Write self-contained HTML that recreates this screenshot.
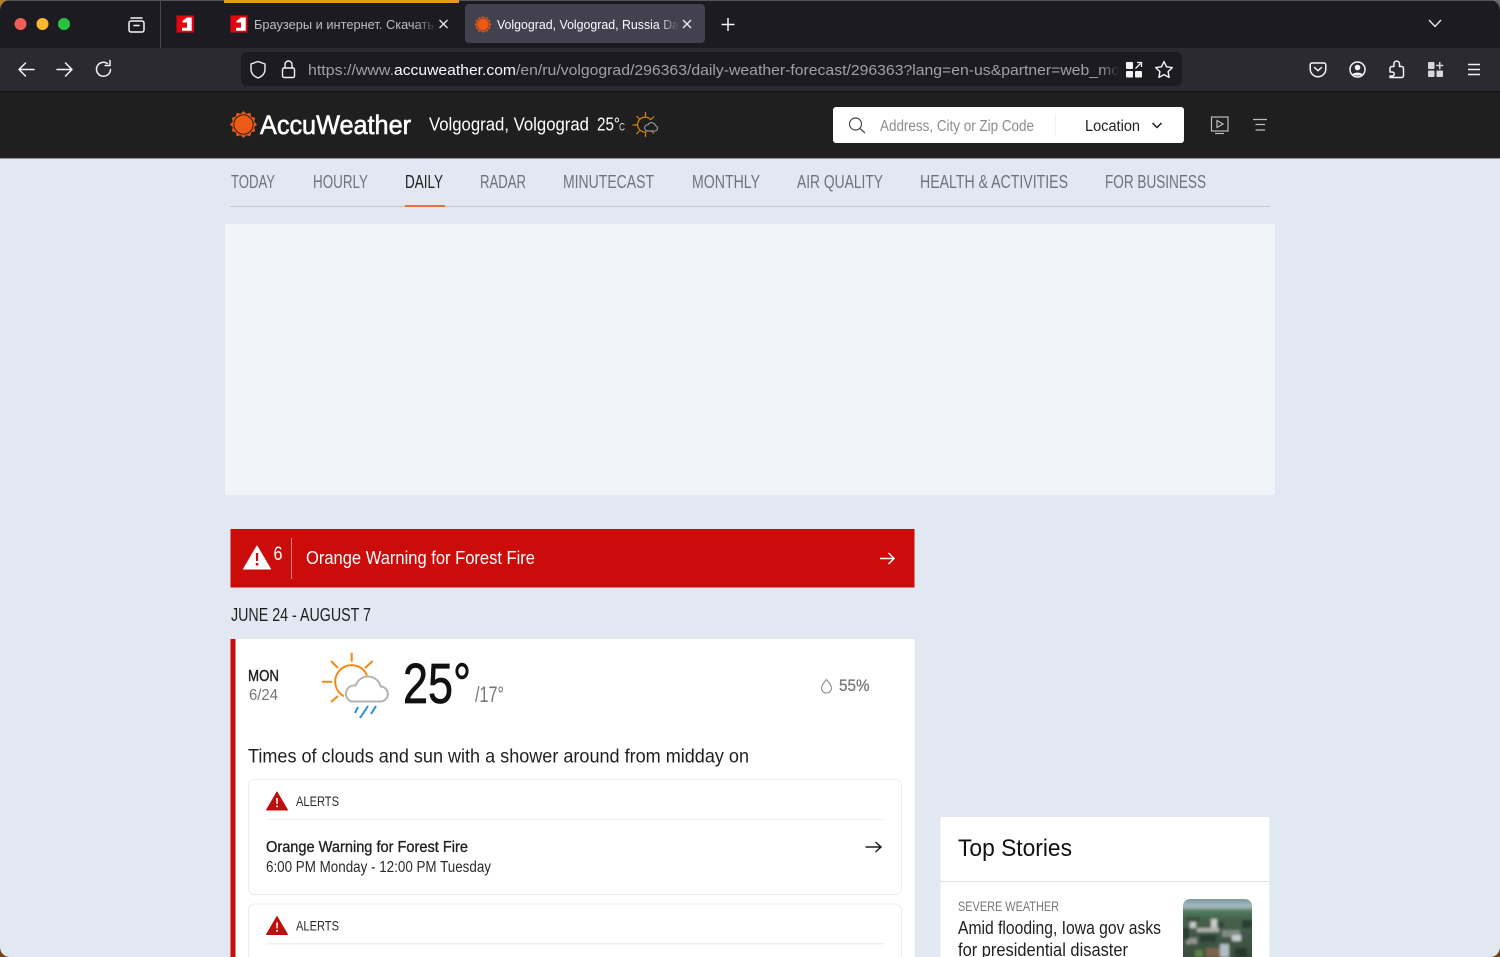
<!DOCTYPE html>
<html><head><meta charset="utf-8"><title>Volgograd</title>
<style>
html,body{margin:0;padding:0;background:#7a4412;width:1500px;height:957px;overflow:hidden}
svg{display:block}
text{font-family:"Liberation Sans Narrow","Liberation Sans","Noto Sans CJK SC",sans-serif}
</style></head><body>
<svg xmlns="http://www.w3.org/2000/svg" width="1500" height="957" viewBox="0 0 1500 957">
<defs>
<linearGradient id="f1"><stop offset="0" stop-color="#1c1b22" stop-opacity="0"/><stop offset="1" stop-color="#1c1b22"/></linearGradient>
<linearGradient id="f2"><stop offset="0" stop-color="#42414d" stop-opacity="0"/><stop offset="1" stop-color="#42414d"/></linearGradient>
<linearGradient id="f3"><stop offset="0" stop-color="#1c1b22" stop-opacity="0"/><stop offset="1" stop-color="#1c1b22"/></linearGradient>
<linearGradient id="sky" x1="0" y1="0" x2="0" y2="1"><stop offset="0" stop-color="#6d8a92"/><stop offset=".14" stop-color="#a9bcc4"/><stop offset=".2" stop-color="#4f7a5c"/><stop offset=".32" stop-color="#46604b"/><stop offset="1" stop-color="#35463b"/></linearGradient>
<filter id="bl" x="-5%" y="-5%" width="110%" height="110%"><feGaussianBlur stdDeviation="1.200"/></filter>
<clipPath id="win"><rect width="1500" height="957" rx="10"/></clipPath>
<clipPath id="thumb"><rect x="1183" y="899" width="69" height="70" rx="7"/></clipPath>
<g id="sun"><path d="M0-13.500 2.850-10.630 6.750-11.690 7.780-7.780 11.690-6.750 10.630-2.850 13.500 0 10.630 2.850 11.690 6.750 7.780 7.780 6.750 11.690 2.850 10.630 0 13.500-2.850 10.630-6.750 11.690-7.780 7.780-11.690 6.750-10.630 2.850-13.500 0-10.630-2.850-11.690-6.750-7.780-7.780-6.750-11.690-2.850-10.630Z" fill="#ee5a13"/><circle r="10.200" fill="currentColor"/><circle r="9.200" fill="#ee5a13"/></g>
</defs>
<rect x="0" y="0" width="12" height="12" fill="#b08030"/>
<rect x="1488" y="0" width="12" height="12" fill="#6a6a70"/>
<g clip-path="url(#win)">
<rect width="1500" height="957" fill="#e2e8f1"/>
<!-- tab bar -->
<rect width="1500" height="48" fill="#1c1b22"/>
<rect x="0" y="0" width="1500" height="1" fill="#55545c"/>
<rect x="224" y="0" width="235" height="3" fill="#e89a1c"/>
<circle cx="20.500" cy="24" r="6" fill="#f25d57"/><circle cx="42.500" cy="24" r="6" fill="#fab62d"/><circle cx="64" cy="24" r="6" fill="#27c53f"/>
<g fill="none" stroke="#f4f4f5" stroke-width="1.500"><rect x="129" y="21" width="15" height="11" rx="2"/><path d="M131 18h11M134 25.500h5" stroke-linecap="round"/></g>
<rect x="160" y="0" width="1" height="48" fill="#4a4950"/>
<g><rect x="176.500" y="15.500" width="17.500" height="17" fill="#e30611"/><path d="M187 17.500h4.700v13.200h-9.700v-3h5v-5.200h-4.500v-1.500z" fill="#fff"/></g>
<g><rect x="230.500" y="15.500" width="17" height="17" fill="#e30611"/><path d="M241 17.500h4.700v13.200h-9.700v-3h5v-5.200h-4.500v-1.500z" fill="#fff"/></g>
<text x="254" y="29" font-size="13" fill="#bdbdc1" textLength="180" lengthAdjust="spacingAndGlyphs" style="font-family:'Liberation Sans',sans-serif">Браузеры и интернет. Скачать</text>
<rect x="415" y="14" width="22" height="20" fill="url(#f1)"/>
<path d="M439.500 20l8 8M447.500 20l-8 8" stroke="#e8e8ea" stroke-width="1.300" fill="none"/>
<rect x="465" y="4" width="240" height="39" rx="4" fill="#42414d"/>
<use href="#sun" color="#42414d" transform="translate(483 24.500) scale(.62)"/>
<text x="497" y="29" font-size="13" fill="#fbfbfe" textLength="182" lengthAdjust="spacingAndGlyphs" style="font-family:'Liberation Sans',sans-serif">Volgograd, Volgograd, Russia Da</text>
<rect x="658" y="14" width="21" height="20" fill="url(#f2)"/>
<path d="M683 20l8 8M691 20l-8 8" stroke="#f0f0f2" stroke-width="1.300" fill="none"/>
<path d="M728 18v13M721.500 24.500h13" stroke="#f4f4f5" stroke-width="1.500" fill="none"/>
<path d="M1429 20l6 6.500 6-6.500" stroke="#e8e8ea" stroke-width="1.400" fill="none"/>
<!-- toolbar -->
<rect y="48" width="1500" height="43" fill="#2b2a33"/>
<rect y="91" width="1500" height="1" fill="#111114"/>
<g fill="none" stroke="#f4f4f5" stroke-width="1.500" stroke-linecap="round" stroke-linejoin="round">
<path d="M34 69.500H19M25.500 63l-6.500 6.500 6.500 6.500"/>
<path d="M57 69.500h15M65.500 63l6.500 6.500-6.500 6.500"/>
<path d="M110.500 69.500a7 7 0 1 1-3-6M110 60.500v5h-4.800"/>
</g>
<rect x="241" y="52" width="941" height="34" rx="6" fill="#1c1b22"/>
<g fill="none" stroke="#f0f0f2" stroke-width="1.400" stroke-linejoin="round">
<path d="M258 61.500l7 2.500v5c0 4.500-3 7.500-7 9-4-1.500-7-4.500-7-9v-5z"/>
<rect x="282.500" y="68" width="12" height="9.500" rx="1.500"/><path d="M285 68v-3.500a3.500 3.500 0 0 1 7 0V68"/>
</g>
<text x="308" y="75" font-size="15" fill="#a0a0a6" textLength="86" lengthAdjust="spacingAndGlyphs" style="font-family:'Liberation Sans',sans-serif">https://www.</text>
<text x="394" y="75" font-size="15" fill="#fbfbfe" textLength="122" lengthAdjust="spacingAndGlyphs" style="font-family:'Liberation Sans',sans-serif">accuweather.com</text>
<text x="516" y="75" font-size="15" fill="#a0a0a6" textLength="604" lengthAdjust="spacingAndGlyphs" style="font-family:'Liberation Sans',sans-serif">/en/ru/volgograd/296363/daily-weather-forecast/296363?lang=en-us&amp;partner=web_mo</text>
<rect x="1100" y="56" width="20" height="26" fill="url(#f3)"/>
<g fill="#f4f4f5"><rect x="1126" y="62" width="7" height="7" rx="1"/><rect x="1126" y="71" width="7" height="6.500" rx="1"/><rect x="1135" y="71" width="7" height="6.500" rx="1"/><path d="M1135.500 68.500l5-5M1137 62.500h4.500V67" stroke="#f4f4f5" stroke-width="1.300" fill="none"/></g>
<path d="M1164 61.500l2.500 5.300 5.800.8-4.200 4 1 5.800-5.100-2.800-5.100 2.800 1-5.800-4.200-4 5.800-.8z" fill="none" stroke="#f4f4f5" stroke-width="1.400" stroke-linejoin="round"/>
<g fill="none" stroke="#f4f4f5" stroke-width="1.500" stroke-linejoin="round" stroke-linecap="round">
<path d="M1312 63h12a1.800 1.800 0 0 1 1.800 1.800v4.200a7.800 7.800 0 0 1-15.600 0v-4.200a1.800 1.800 0 0 1 1.800-1.800z"/><path d="M1314.500 67.500l3.500 3.200 3.500-3.200"/>
<circle cx="1357.500" cy="69.500" r="7.500"/>
<path d="M1390 77.500h11.500a2 2 0 0 0 2-2v-7a2 2 0 0 0-2-2h-2v-2.500a2.800 2.800 0 0 0-5.600-.2v2.700h-2a1.900 1.900 0 0 0-1.900 2v3.500h2.200a2 2 0 0 1 0 4h-2.200z"/>
</g>
<circle cx="1357.500" cy="67.500" r="2.800" fill="#f4f4f5"/><path d="M1352.500 74.500c1-2.500 9-2.500 10 0-2.500 1.500-7.500 1.500-10 0z" fill="#f4f4f5"/>
<g fill="#d8d8da"><rect x="1428" y="62" width="6.500" height="7" rx="1"/><rect x="1428" y="70.500" width="6.500" height="6.500" rx="1"/><rect x="1436.500" y="70.500" width="6.500" height="6.500" rx="1"/><path d="M1439 62h1.500v2.800h2.800v1.500h-2.800v2.800H1439v-2.800h-2.800v-1.500h2.800z"/></g>
<path d="M1468 64.500h12M1468 69.500h12M1468 74.500h12" stroke="#f4f4f5" stroke-width="1.500" fill="none"/>
<!-- site header -->
<rect y="92" width="1500" height="66" fill="#1f1f1f"/>
<rect y="158" width="1500" height="1" fill="#8f9296"/>
<use href="#sun" color="#1f1f1f" transform="translate(243.500 124.500)"/>
<text x="260" y="134" font-size="27" fill="#fff" stroke="#fff" stroke-width=".6" textLength="151" lengthAdjust="spacingAndGlyphs">AccuWeather</text>
<text x="429" y="130.500" font-size="18" fill="#fff" textLength="160" lengthAdjust="spacingAndGlyphs">Volgograd, Volgograd</text>
<text x="597" y="130.500" font-size="18" fill="#fff" textLength="23" lengthAdjust="spacingAndGlyphs">25°</text>
<text x="619" y="130.500" font-size="11" fill="#ddd" textLength="6" lengthAdjust="spacingAndGlyphs">C</text>
<g fill="none" stroke="#d9860f" stroke-width="1.200">
<path d="M645.500 112v5M645.500 132v5M632.500 125h5M636.500 116l3 3M654 116.500l-3 3M636.500 134l3-3M654 133.500l-3-3"/>
<path d="M651 120a7.500 7.500 0 1 0-4.500 12"/>
</g>
<path d="M647.500 131h7.500a2.700 2.700 0 0 0 .4-5.300 4 4 0 0 0-7.400-.9 3.100 3.100 0 0 0-.5 6.200z" fill="#1f1f1f" stroke="#a9a9a9" stroke-width="1"/>
<rect x="833" y="107" width="351" height="36" rx="3" fill="#fff"/>
<circle cx="855.500" cy="124" r="6" fill="none" stroke="#444" stroke-width="1.200"/><path d="M860 128.500l5 4.500" stroke="#444" stroke-width="1.200"/>
<text x="880" y="131" font-size="15.500" fill="#8c8c8c" textLength="154" lengthAdjust="spacingAndGlyphs">Address, City or Zip Code</text>
<rect x="1055" y="114" width="1" height="22" fill="#f0f0f0"/>
<text x="1085" y="131" font-size="15.500" fill="#1f1f1f" textLength="55" lengthAdjust="spacingAndGlyphs">Location</text>
<path d="M1152.500 123l4.500 4.500 4.500-4.500" fill="none" stroke="#1f1f1f" stroke-width="1.500"/>
<g fill="none" stroke="#bdbdbd" stroke-width="1.200"><rect x="1211.500" y="117" width="16.500" height="14"/><path d="M1217 120.500l6 3.500-6 3.500z"/><path d="M1215 133.500h9"/>
<path d="M1253 119.500h14M1255.500 124.500h9.500M1255.500 130h9.500"/></g>
<!-- nav -->
<g font-size="18.500" fill="#6e747b">
<text x="231" y="188" textLength="44" lengthAdjust="spacingAndGlyphs">TODAY</text>
<text x="313" y="188" textLength="55" lengthAdjust="spacingAndGlyphs">HOURLY</text>
<text x="405" y="188" textLength="38" lengthAdjust="spacingAndGlyphs" fill="#1f1f1f">DAILY</text>
<text x="480" y="188" textLength="46" lengthAdjust="spacingAndGlyphs">RADAR</text>
<text x="563" y="188" textLength="91" lengthAdjust="spacingAndGlyphs">MINUTECAST</text>
<text x="692" y="188" textLength="68" lengthAdjust="spacingAndGlyphs">MONTHLY</text>
<text x="797" y="188" textLength="86" lengthAdjust="spacingAndGlyphs">AIR QUALITY</text>
<text x="920" y="188" textLength="148" lengthAdjust="spacingAndGlyphs">HEALTH &amp; ACTIVITIES</text>
<text x="1105" y="188" textLength="101" lengthAdjust="spacingAndGlyphs">FOR BUSINESS</text>
</g>
<rect x="230" y="206" width="1040" height="1" fill="#c4c6c8"/>
<rect x="405" y="205" width="40" height="2" fill="#e8703c"/>
<rect x="225" y="224" width="1050" height="271" fill="#f0f3f8"/>
<!-- alert bar -->
<rect x="230.500" y="529" width="684" height="58.500" fill="#cc0b0b"/>
<path d="M257 546l13.500 23h-27z" fill="#fff" stroke="#fff" stroke-width="1" stroke-linejoin="round"/>
<path d="M255.800 553h2.500l-.3 8h-2zM255.800 563h2.500v2.500h-2.500z" fill="#cc0b0b"/>
<text x="273.500" y="560" font-size="19" fill="#fff" textLength="9" lengthAdjust="spacingAndGlyphs">6</text>
<rect x="291" y="538" width="1" height="41" fill="#e98a8a"/>
<text x="306" y="564" font-size="18.500" fill="#fff" textLength="229" lengthAdjust="spacingAndGlyphs">Orange Warning for Forest Fire</text>
<path d="M880 558.500h14M888.500 553l5.500 5.500-5.500 5.500" fill="none" stroke="#fff" stroke-width="1.500"/>
<text x="231" y="621" font-size="18" fill="#1f1f1f" textLength="140" lengthAdjust="spacingAndGlyphs">JUNE 24 - AUGUST 7</text>
<!-- daily card -->
<rect x="230.500" y="639" width="684" height="330" fill="#fff"/>
<rect x="230.500" y="639" width="5" height="330" fill="#cc0b0b"/>
<text x="248" y="681" font-size="16" fill="#1f1f1f" stroke="#1f1f1f" stroke-width=".4" textLength="31" lengthAdjust="spacingAndGlyphs">MON</text>
<text x="249" y="700" font-size="15.500" fill="#737373" textLength="29" lengthAdjust="spacingAndGlyphs">6/24</text>
<g fill="none" stroke="#f5890f" stroke-width="2">
<path d="M351.700 652.700v9M322 681.700h10M331 661l7 7M372.700 661l-7.700 7M331 702l7-6"/>
<path d="M344 696.300A16.500 16.500 0 1 1 367 675.500"/>
</g>
<path d="M351 701.500h29a7.500 7.500 0 0 0 .7-15 13 13 0 0 0-25-1 8.400 8.400 0 0 0-4.700 16z" fill="#fff" stroke="#b3b3b3" stroke-width="2"/>
<path d="M358 707l-3 6M368 706l-8 12M376 706l-5 8" stroke="#2b8fe0" stroke-width="2" fill="none"/>
<text x="403" y="703" font-size="57" fill="#111" stroke="#111" stroke-width=".7" textLength="68" lengthAdjust="spacingAndGlyphs">25°</text>
<text x="475" y="702" font-size="22" fill="#777" textLength="29" lengthAdjust="spacingAndGlyphs">/17°</text>
<path d="M826.500 679.500c3 3.500 5 6 5 8.500a5 5 0 0 1-10 0c0-2.500 2-5 5-8.500z" fill="none" stroke="#8a8a8a" stroke-width="1"/>
<text x="839" y="691" font-size="16.500" fill="#767676" stroke="#767676" stroke-width=".25" textLength="30.500" lengthAdjust="spacingAndGlyphs">55%</text>
<text x="248" y="762.500" font-size="19.500" fill="#1f1f1f" textLength="501" lengthAdjust="spacingAndGlyphs">Times of clouds and sun with a shower around from midday on</text>
<rect x="248.500" y="779.500" width="653" height="115" rx="6" fill="#fff" stroke="#ececec"/>
<path d="M277 792l10.500 18h-21z" fill="#c00e0e" stroke="#c00e0e" stroke-linejoin="round"/>
<path d="M276.200 798h1.700l-.2 6h-1.300zM276.200 805.500h1.700v1.700h-1.700z" fill="#fff"/>
<text x="296" y="806" font-size="14" fill="#2a2a2a" textLength="43" lengthAdjust="spacingAndGlyphs">ALERTS</text>
<rect x="266" y="819" width="618" height="1" fill="#efefef"/>
<text x="266" y="852" font-size="16" fill="#1f1f1f" stroke="#1f1f1f" stroke-width=".35" textLength="202" lengthAdjust="spacingAndGlyphs">Orange Warning for Forest Fire</text>
<text x="266" y="872" font-size="15.500" fill="#2a2a2a" textLength="225" lengthAdjust="spacingAndGlyphs">6:00 PM Monday - 12:00 PM Tuesday</text>
<path d="M865.500 847h15M875.500 842l5.500 5-5.500 5" fill="none" stroke="#1f1f1f" stroke-width="1.500"/>
<rect x="248.500" y="904" width="653" height="90" rx="6" fill="#fff" stroke="#ececec"/>
<path d="M277 916.500l10.500 18h-21z" fill="#c00e0e" stroke="#c00e0e" stroke-linejoin="round"/>
<path d="M276.200 922.500h1.700l-.2 6h-1.300zM276.200 930h1.700v1.700h-1.700z" fill="#fff"/>
<text x="296" y="930.500" font-size="14" fill="#2a2a2a" textLength="43" lengthAdjust="spacingAndGlyphs">ALERTS</text>
<rect x="266" y="943" width="618" height="1.500" fill="#efefef"/>
<!-- top stories -->
<rect x="940.500" y="817" width="329" height="150" fill="#fff"/>
<rect x="940.500" y="881" width="329" height="1" fill="#dfe1e4"/>
<text x="958" y="856" font-size="24" fill="#111" textLength="114" lengthAdjust="spacingAndGlyphs">Top Stories</text>
<text x="958" y="911" font-size="14" fill="#777" textLength="101" lengthAdjust="spacingAndGlyphs">SEVERE WEATHER</text>
<text x="958" y="934" font-size="18" fill="#1f1f1f" textLength="203" lengthAdjust="spacingAndGlyphs">Amid flooding, Iowa gov asks</text>
<text x="958" y="956" font-size="18" fill="#1f1f1f" textLength="170" lengthAdjust="spacingAndGlyphs">for presidential disaster</text>
<g clip-path="url(#thumb)">
<g filter="url(#bl)">
<rect x="1180" y="896" width="75" height="75" fill="url(#sky)"/>
<rect x="1190" y="922" width="6" height="6" fill="#c8ccc9"/><rect x="1197" y="928" width="22" height="4" fill="#aeb2aa"/><rect x="1211" y="919" width="6" height="9" fill="#c8ccc9"/>
<rect x="1222" y="930" width="18" height="7" fill="#7f8a80"/><rect x="1232" y="935" width="9" height="6" fill="#c8cdcf"/><rect x="1186" y="938" width="11" height="6" fill="#8f948b"/>
<rect x="1220" y="944" width="9" height="13" fill="#b3bec2"/><rect x="1206" y="948" width="14" height="9" fill="#7c6350"/><rect x="1195" y="950" width="8" height="7" fill="#5f8040"/><rect x="1235" y="948" width="12" height="9" fill="#26382b"/>
<rect x="1200" y="935" width="16" height="7" fill="#2b3d31"/><rect x="1183" y="928" width="6" height="12" fill="#2b3d31"/><rect x="1242" y="920" width="10" height="8" fill="#2b3d31"/><rect x="1218" y="922" width="6" height="6" fill="#324537"/><rect x="1186" y="917" width="14" height="4" fill="#374d3d"/>
</g>
</g>
</g>
</svg>
</body></html>
